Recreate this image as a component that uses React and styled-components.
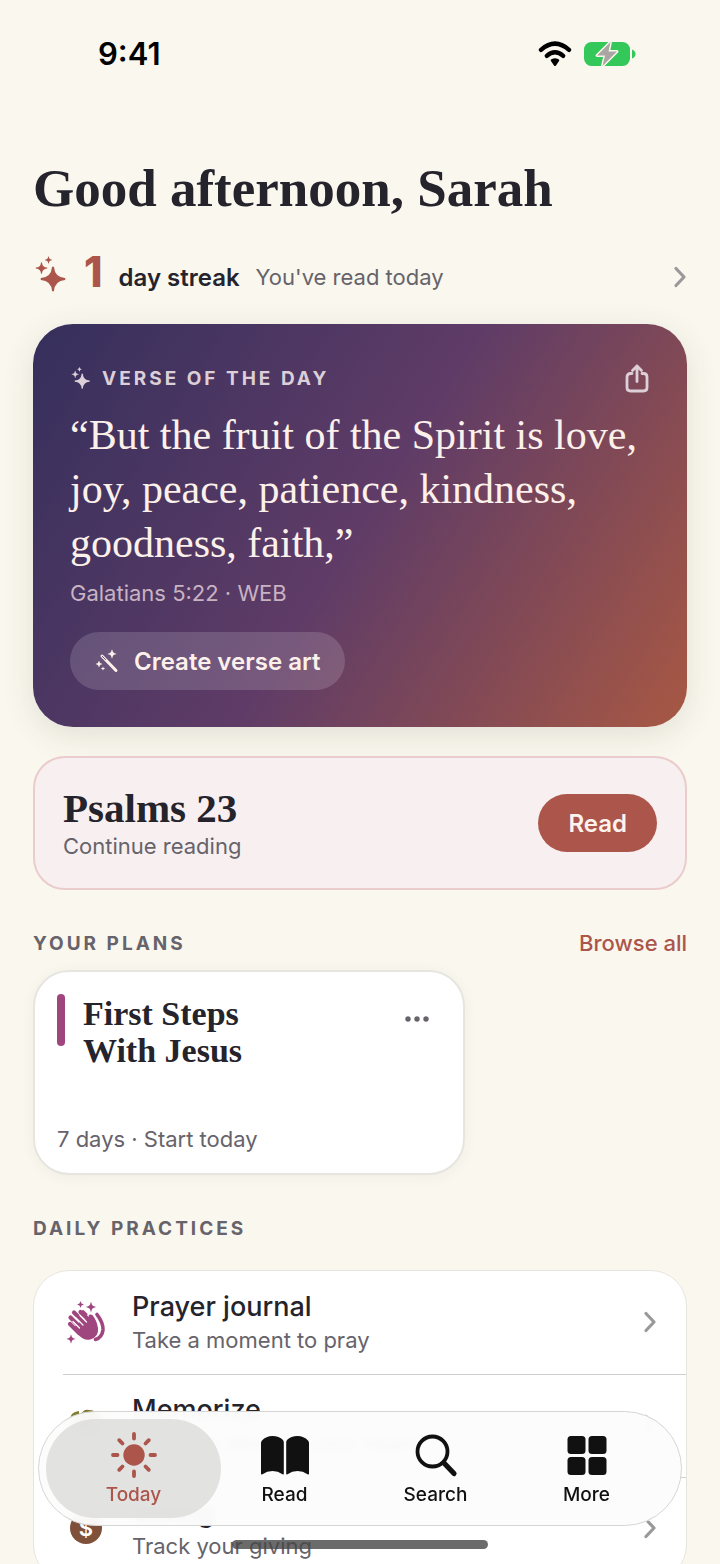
import React from 'react';
import styled, { createGlobalStyle } from 'styled-components';

const sans = "Inter, 'Liberation Sans', sans-serif";
const serif = "'Liberation Serif', serif";

const colors = {
  paper: '#faf7ee',
  ink: '#25232b',
  muted: '#66636a',
  accent: '#ab554b',
  plum: '#a0467f',
  line: '#e6e5df',
};

// four-pointed star around (x, y)
const star = (x, y, r) => {
  const c = r * 0.15;
  const t = r * 0.08;
  return `M${x - t} ${y - r}Q${x} ${y - r - t} ${x + t} ${y - r}Q${x + c} ${y - c} ${x + r} ${y - t}Q${x + r + t} ${y} ${x + r} ${y + t}Q${x + c} ${y + c} ${x + t} ${y + r}Q${x} ${y + r + t} ${x - t} ${y + r}Q${x - c} ${y + c} ${x - r} ${y + t}Q${x - r - t} ${y} ${x - r} ${y - t}Q${x - c} ${y - c} ${x - t} ${y - r}Z`;
};

const SparklesIcon = ({ size }) => (
  <svg width={size} height={size} viewBox="0 0 36 36" fill="currentColor" aria-hidden="true">
    <path d={star(20, 23, 12)} />
    <path d={star(8.5, 12, 5.6)} />
    <path d={star(15.5, 4, 3.4)} />
  </svg>
);

const WandIcon = () => (
  <svg width="24" height="24" viewBox="0 0 24 24" fill="currentColor" aria-hidden="true">
    <path d="M7 7L21 21.500" stroke="currentColor" strokeWidth="3" strokeLinecap="round" />
    <path d="M7.200 7.200L10.500 10.600" stroke="#735173" strokeWidth="1" strokeLinecap="round" />
    <path d={star(17, 5, 4.2)} />
    <path d={star(4, 15, 3)} />
    <path d={star(8, 19.5, 1.8)} />
  </svg>
);

const ShareIcon = () => (
  <svg width="26" height="30" viewBox="0 0 26 30" fill="none" stroke="currentColor" strokeWidth="2.800" strokeLinecap="round" strokeLinejoin="round" aria-hidden="true">
    <path d="M8 10.500H6.500Q3 10.500 3 14V24.500Q3 28 6.500 28H19.500Q23 28 23 24.500V14Q23 10.500 19.500 10.500H18" />
    <path d="M13 18.500V3M8.500 7.500L13 3L17.500 7.500" />
  </svg>
);

const ChevronIcon = () => (
  <svg width="14" height="22" viewBox="0 0 14 22" fill="none" stroke="#9a989a" strokeWidth="3.200" strokeLinecap="round" strokeLinejoin="round" aria-hidden="true">
    <path d="M3 2.500L11 11L3 19.500" />
  </svg>
);

const WifiIcon = () => (
  <svg width="34" height="26" viewBox="0 0 34 26" fill="none" stroke="#000" strokeWidth="4.400" aria-hidden="true">
    <path d="M3 8.800Q17 -3.500 31 8.800" strokeLinecap="round" />
    <path d="M8.800 14.800Q17 7.800 25.200 14.800" strokeLinecap="round" />
    <path d="M12.800 19.800Q12.200 18.800 14 18Q17 16.600 20 18Q21.800 18.800 21.200 19.800L18 24.400Q17 25.600 16 24.400Z" fill="#000" stroke="none" />
  </svg>
);

const BatteryIcon = () => (
  <svg width="52" height="28" viewBox="0 0 52 28" aria-hidden="true">
    <rect x="0" y="2" width="46" height="24" rx="7.500" fill="#34c759" />
    <path d="M48 9.500Q51.500 11 51.500 14Q51.500 17 48 18.500Z" fill="#34c759" />
    <path d="M26.500 2L13 15.500H21L18.500 26L33 11.500H24.500Z" fill="#aaa6a3" stroke="#faf7ee" strokeWidth="3" strokeLinejoin="round" paintOrder="stroke" />
  </svg>
);

const HandsIcon = () => (
  <svg width="40" height="44" viewBox="0 0 40 44" fill="none" stroke={colors.plum} strokeLinecap="round" strokeLinejoin="round" aria-hidden="true">
    <path d="M31 14.500Q37.500 23 37 30Q36 37.500 29.500 39.500" strokeWidth="3.600" />
    <path d="M17 11.500L20 14.500" strokeWidth="3" />
    <path d="M4 24L13 33M4.500 17.500L15 28M8 12.500L20 24.500M14.500 12L25 22" strokeWidth="4.200" />
    <path d="M24.500 16.500Q27 24 27 25" strokeWidth="4" />
    <path d="M25 22L17 20L10 27L12 33Q18 40 24 38.500Q32 36 31 28Q30 21 26 16Z" fill={colors.plum} strokeWidth="2" />
    <path d="M7 21.500L13.500 28M9.500 17.500L17 25M14 15.500L20.500 22" stroke="#fff" strokeWidth="1.200" />
    <g fill={colors.plum} stroke="none">
      <path d={star(25, 7, 4.6)} />
      <path d={star(14.5, 4.5, 3)} />
      <path d={star(5, 39, 4)} />
    </g>
  </svg>
);

const BrainIcon = () => (
  <svg width="40" height="44" viewBox="0 0 40 44" fill="#7f7a31" aria-hidden="true">
    <path d="M4 17Q4 9 13 8V18Q8 23 4 17Z" />
    <path d="M15 12Q17 6 23 7Q29 7 31 11Q37 14 35 22Q33 30 25 29L22 38H18L16 28Z" />
    <circle cx="13" cy="22" r="8" />
  </svg>
);

const CoinIcon = () => (
  <svg width="40" height="44" viewBox="0 0 40 44" aria-hidden="true">
    <circle cx="20" cy="22" r="16" fill="#80513a" />
    <text x="20" y="30" textAnchor="middle" fontFamily="Inter, sans-serif" fontSize="22" fontWeight="600" fill="#fff">$</text>
  </svg>
);

const SunIcon = () => (
  <svg width="48" height="48" viewBox="0 0 48 48" fill="currentColor" stroke="currentColor" strokeWidth="3.800" strokeLinecap="round" aria-hidden="true">
    <circle cx="24" cy="24" r="10.700" stroke="none" />
    <path d="M24 3V7.500M24 40.500V45M3 24H7.500M40.500 24H45M9.200 9.200L12.500 12.500M35.500 35.500L38.800 38.800M9.200 38.800L12.500 35.500M35.500 12.500L38.800 9.200" />
  </svg>
);

const BookIcon = () => (
  <svg width="50" height="48" viewBox="0 0 50 48" fill="currentColor" aria-hidden="true">
    <path d="M1 12Q1 10.500 2 9.500Q6 5 12.500 5Q19 5 23 9Q23.800 10 23.800 11.500V42.500Q23.800 44 22.500 43.200Q18 40 12.500 40Q7 40 2.500 43.200Q1 44 1 42.500Z" />
    <path d="M49 12Q49 10.500 48 9.500Q44 5 37.500 5Q31 5 27 9Q26.200 10 26.200 11.500V42.500Q26.200 44 27.500 43.200Q32 40 37.500 40Q43 40 47.500 43.200Q49 44 49 42.500Z" />
  </svg>
);

const SearchIcon = () => (
  <svg width="48" height="48" viewBox="0 0 48 48" fill="none" stroke="currentColor" strokeLinecap="round" aria-hidden="true">
    <circle cx="20.500" cy="20.500" r="15" strokeWidth="3.800" />
    <path d="M32 32L42 42.500" strokeWidth="5.200" />
  </svg>
);

const GridIcon = () => (
  <svg width="48" height="48" viewBox="0 0 48 48" fill="currentColor" aria-hidden="true">
    <rect x="4.500" y="5" width="18" height="18" rx="3.500" />
    <rect x="25.500" y="5" width="18" height="18" rx="3.500" />
    <rect x="4.500" y="26" width="18" height="18" rx="3.500" />
    <rect x="25.500" y="26" width="18" height="18" rx="3.500" />
  </svg>
);

const practices = [
  { title: 'Prayer journal', text: 'Take a moment to pray', icon: <HandsIcon /> },
  { title: 'Memorize', text: 'Hide the Word in your heart', icon: <BrainIcon /> },
  { title: 'Giving', text: 'Track your giving', icon: <CoinIcon /> },
];

const tabs = [
  { label: 'Today', icon: <SunIcon />, active: true },
  { label: 'Read', icon: <BookIcon /> },
  { label: 'Search', icon: <SearchIcon /> },
  { label: 'More', icon: <GridIcon /> },
];

const App = () => (
  <Screen>
    <GlobalStyle />
    <StatusBar>
      <Clock>9:41</Clock>
      <StatusIcons>
        <WifiIcon />
        <BatteryIcon />
      </StatusIcons>
    </StatusBar>
    <Content>
      <Greeting>Good afternoon, Sarah</Greeting>
      <Streak>
        <SparklesIcon size={36} />
        <strong>1</strong>
        <b>day streak</b>
        <span>You've read today</span>
        <ChevronIcon />
      </Streak>
      <VerseCard>
        <VerseHead>
          <SparklesIcon size={22} />
          <h2>Verse of the day</h2>
          <button type="button" aria-label="Share"><ShareIcon /></button>
        </VerseHead>
        <Verse>“But the fruit of the Spirit is love, joy, peace, patience, kindness, goodness, faith,”</Verse>
        <Reference>Galatians 5:22 · WEB</Reference>
        <ArtButton type="button">
          <WandIcon />
          Create verse art
        </ArtButton>
      </VerseCard>
      <ReadingCard>
        <div>
          <h2>Psalms 23</h2>
          <p>Continue reading</p>
        </div>
        <ReadButton type="button">Read</ReadButton>
      </ReadingCard>
      <SectionHead>
        <h2>Your plans</h2>
        <a href="#plans">Browse all</a>
      </SectionHead>
      <PlanCard>
        <PlanTop>
          <PlanMark />
          <h3>First Steps<br />With Jesus</h3>
          <button type="button" aria-label="Plan options">
            <svg width="24" height="6" viewBox="0 0 24 6" fill="currentColor" aria-hidden="true">
              <circle cx="3" cy="3" r="2.700" />
              <circle cx="12" cy="3" r="2.700" />
              <circle cx="21" cy="3" r="2.700" />
            </svg>
          </button>
        </PlanTop>
        <p>7 days · Start today</p>
      </PlanCard>
      <SectionHead $spaced>
        <h2>Daily practices</h2>
      </SectionHead>
      <PracticeList>
        {practices.map((item) => (
          <PracticeRow key={item.title} href="#practice">
            {item.icon}
            <div>
              <strong>{item.title}</strong>
              <span>{item.text}</span>
            </div>
            <ChevronIcon />
          </PracticeRow>
        ))}
      </PracticeList>
    </Content>
    <TabBar>
      {tabs.map((tab) => (
        <Tab key={tab.label} type="button" $active={tab.active}>
          {tab.icon}
          {tab.label}
        </Tab>
      ))}
    </TabBar>
    <HomeIndicator />
  </Screen>
);

const GlobalStyle = createGlobalStyle`
  * {
    box-sizing: border-box;
  }
  body {
    margin: 0;
    background: ${colors.paper};
    color: ${colors.ink};
    font-family: ${sans};
  }
  h1, h2, h3, p {
    margin: 0;
  }
  button {
    border: 0;
    padding: 0;
    background: none;
    color: inherit;
    font-family: inherit;
  }
  a {
    color: inherit;
    text-decoration: none;
  }
  svg {
    display: block;
    flex-shrink: 0;
  }
`;

const Screen = styled.div`
  height: 100vh;
  overflow-y: auto;
  scrollbar-width: none;
`;

const StatusBar = styled.header`
  display: flex;
  justify-content: space-between;
  align-items: center;
  padding: 36px 84px 0 98px;
`;

const Clock = styled.div`
  font-size: 31px;
  line-height: 36px;
  font-weight: 600;
  color: #000;
`;

const StatusIcons = styled.div`
  display: flex;
  align-items: center;
  gap: 12px;
`;

const Content = styled.main`
  padding: 84px 33px 160px;
`;

const Greeting = styled.h1`
  font-family: ${serif};
  font-size: 53px;
  line-height: 64px;
  font-weight: 700;
`;

const Streak = styled.div`
  display: flex;
  align-items: center;
  height: 60px;
  margin: 27px 0 17px;
  svg:first-child {
    margin-bottom: 6px;
    color: ${colors.accent};
  }
  strong {
    margin: 0 16px 10px 15px;
    color: ${colors.accent};
    font-size: 42px;
    line-height: 50px;
    font-weight: 800;
  }
  b {
    font-size: 24px;
    font-weight: 600;
  }
  span {
    flex: 1;
    margin-left: 16px;
    color: ${colors.muted};
    font-size: 22px;
  }
`;

const VerseCard = styled.section`
  padding: 37px;
  border-radius: 40px;
  background: linear-gradient(122deg, #352f5c 0%, #5f3c67 50%, #a85843 100%);
  box-shadow: 0 8px 32px rgba(60, 60, 50, 0.12);
  color: #fcf1ea;
`;

const VerseHead = styled.div`
  display: flex;
  align-items: center;
  gap: 10px;
  height: 34px;
  color: #ddcfd7;
  h2 {
    flex: 1;
    font-size: 19px;
    font-weight: 700;
    letter-spacing: 3px;
    text-transform: uppercase;
  }
`;

const Verse = styled.p`
  margin-top: 13px;
  font-family: ${serif};
  font-size: 42px;
  line-height: 54px;
`;

const Reference = styled.p`
  margin: 8px 0 24px;
  color: #c8b3c2;
  font-size: 22px;
  line-height: 30px;
`;

const ArtButton = styled.button`
  display: flex;
  align-items: center;
  gap: 15px;
  height: 58px;
  padding: 0 25px;
  border-radius: 29px;
  background: rgba(255, 255, 255, 0.15);
  font-size: 24px;
  font-weight: 600;
`;

const ReadingCard = styled.section`
  display: flex;
  align-items: center;
  justify-content: space-between;
  height: 134px;
  margin-top: 29px;
  padding: 0 28px;
  border: 2px solid #e9cccb;
  border-radius: 32px;
  background: #f8f0f0;
  h2 {
    padding-top: 2px;
    font-family: ${serif};
    font-size: 41px;
    line-height: 44px;
  }
  p {
    color: ${colors.muted};
    font-size: 22px;
    line-height: 32px;
  }
`;

const ReadButton = styled.button`
  height: 58px;
  padding: 0 30px;
  border-radius: 29px;
  background: ${colors.accent};
  color: #fdf3ee;
  font-size: 24px;
  font-weight: 600;
`;

const SectionHead = styled.div`
  display: flex;
  align-items: center;
  justify-content: space-between;
  height: 32px;
  margin: ${({ $spaced }) => ($spaced ? '37px 0 26px' : '37px 0 11px')};
  h2 {
    color: ${colors.muted};
    font-size: 19px;
    font-weight: 700;
    letter-spacing: 3px;
    text-transform: uppercase;
  }
  a {
    color: ${colors.accent};
    font-size: 22px;
    font-weight: 500;
  }
`;

const PlanCard = styled.article`
  display: flex;
  flex-direction: column;
  justify-content: space-between;
  width: 66%;
  height: 205px;
  padding: 22px 22px 19px;
  border: 2px solid ${colors.line};
  border-radius: 36px;
  background: #fff;
  box-shadow: 0 2px 14px rgba(60, 60, 50, 0.05);
  p {
    color: ${colors.muted};
    font-size: 22px;
    line-height: 30px;
  }
`;

const PlanTop = styled.div`
  display: flex;
  align-items: flex-start;
  h3 {
    flex: 1;
    margin-left: 18px;
    padding-top: 1px;
    font-family: ${serif};
    font-size: 34px;
    line-height: 37px;
  }
  button {
    padding: 22px 12px;
    color: ${colors.muted};
  }
`;

const PlanMark = styled.div`
  width: 8px;
  height: 52px;
  border-radius: 4px;
  background: ${colors.plum};
`;

const PracticeList = styled.section`
  border: 1px solid ${colors.line};
  border-radius: 36px;
  background: #fff;
`;

const PracticeRow = styled.a`
  display: flex;
  align-items: center;
  height: 103px;
  margin-left: 29px;
  padding: 0 29px 2px 3px;
  & + & {
    border-top: 1px solid #cfcecd;
  }
  div {
    flex: 1;
    margin-left: 26px;
  }
  strong,
  span {
    display: block;
  }
  strong {
    font-size: 27px;
    line-height: 36px;
    font-weight: 500;
  }
  span {
    color: ${colors.muted};
    font-size: 22px;
    line-height: 30px;
  }
`;

const TabBar = styled.nav`
  position: fixed;
  left: 38px;
  right: 38px;
  bottom: 38px;
  display: flex;
  height: 115px;
  padding: 7px 19px;
  border: 1px solid #d5d5d3;
  border-radius: 58px;
  background: rgba(252, 252, 252, 0.96);
  backdrop-filter: blur(5px);
`;

const Tab = styled.button`
  flex: 1;
  display: flex;
  flex-direction: column;
  align-items: center;
  justify-content: center;
  gap: 2px;
  margin: 0 -12px;
  padding-top: 2px;
  border-radius: 50px;
  background: ${({ $active }) => ($active ? 'rgba(215, 215, 213, 0.7)' : 'none')};
  color: ${({ $active }) => ($active ? colors.accent : '#111')};
  font-size: 19px;
  line-height: 28px;
  font-weight: 500;
`;

const HomeIndicator = styled.div`
  position: fixed;
  left: 50%;
  bottom: 15px;
  width: 256px;
  height: 9px;
  margin-left: -128px;
  border-radius: 5px;
  background: rgba(70, 70, 70, 0.8);
`;

export default App;
